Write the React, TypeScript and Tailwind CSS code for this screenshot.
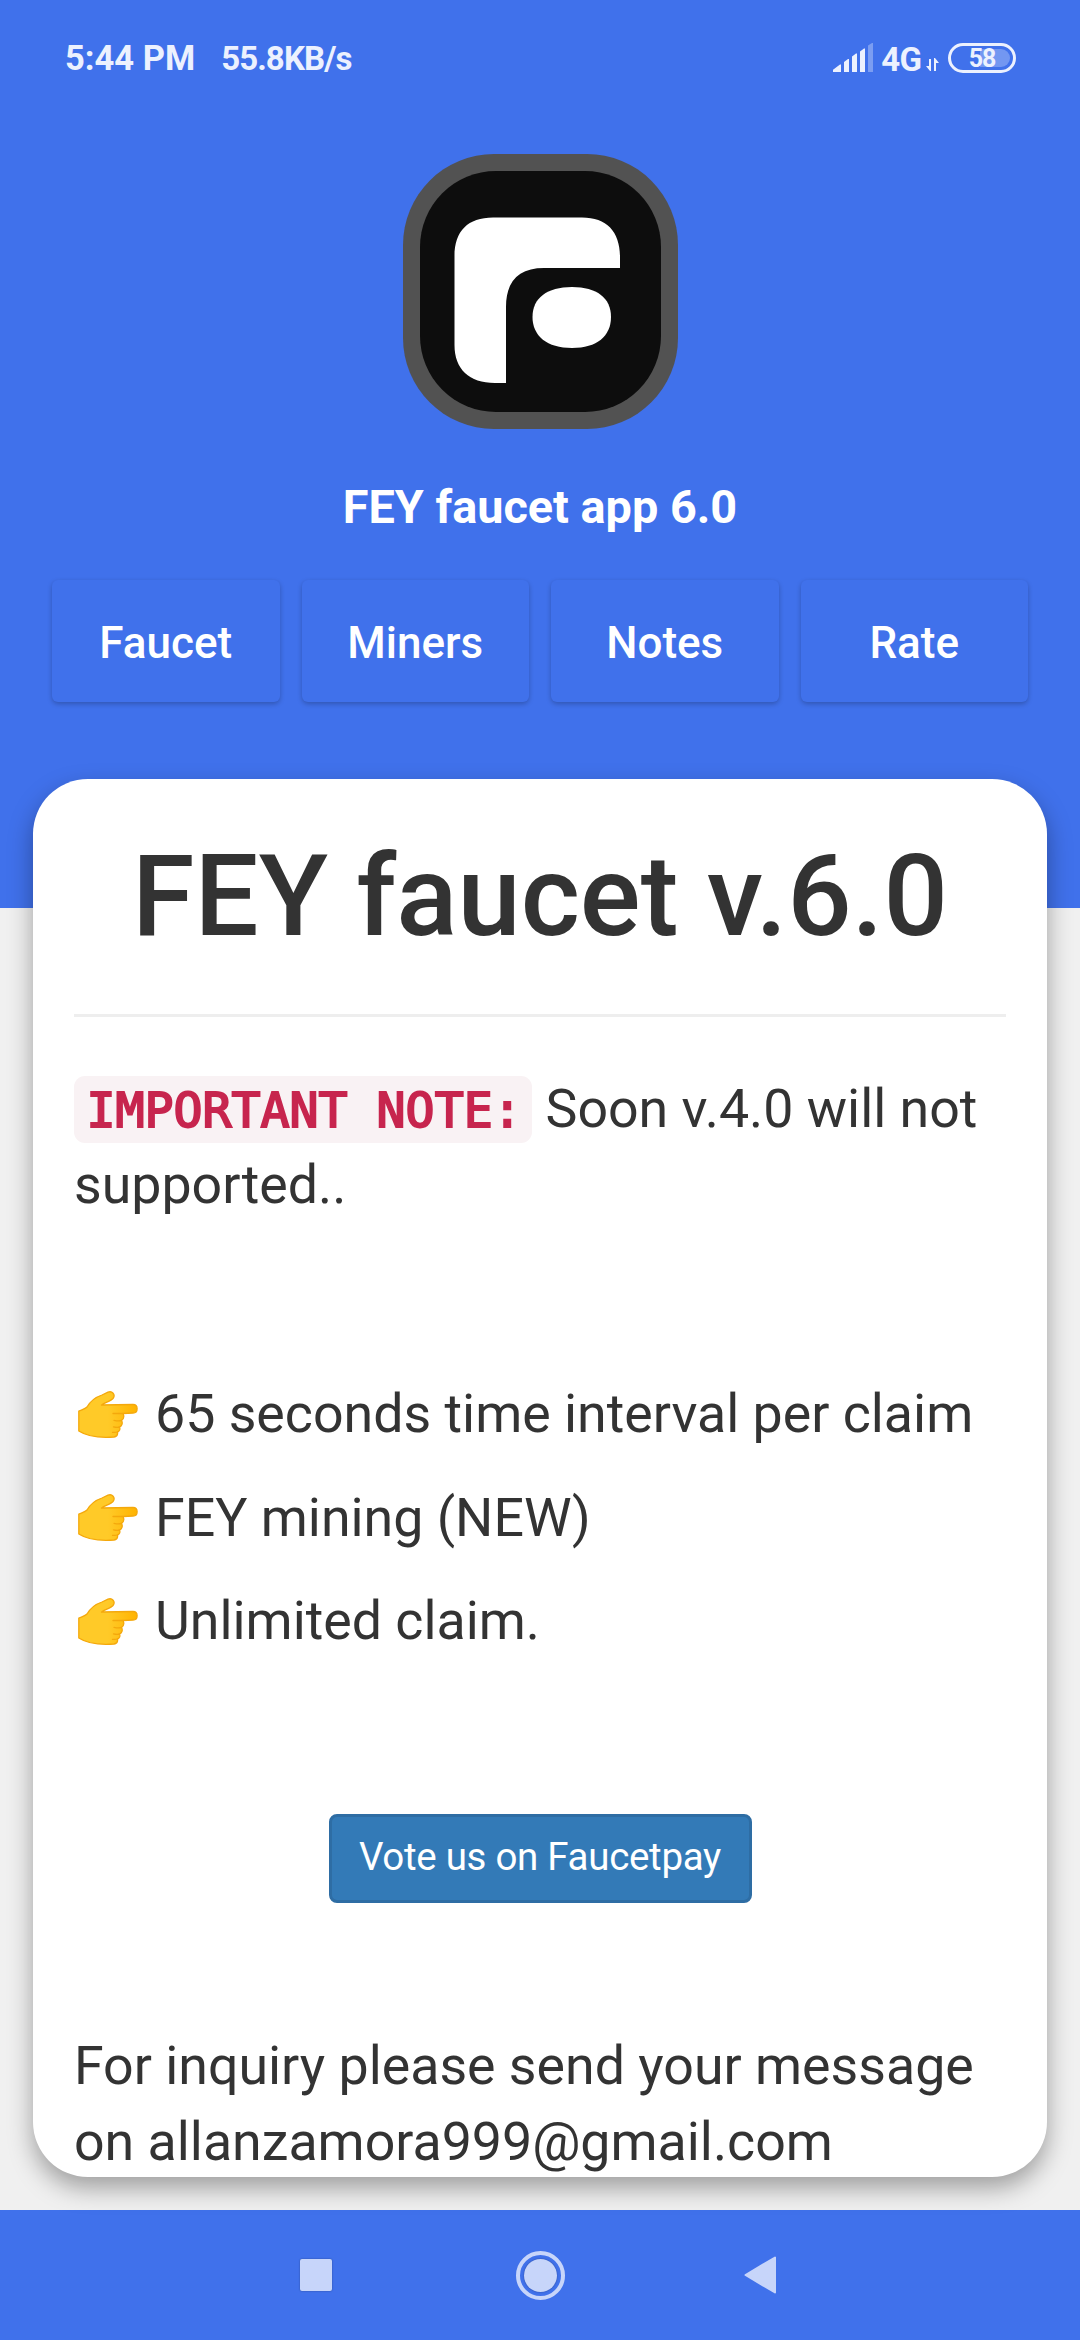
const tabs = ["Faucet", "Miners", "Notes", "Rate"];

const features = [
    "65 seconds time interval per claim",
    "FEY mining (NEW)",
    "Unlimited claim.",
];

function SignalIcon() {
    return (
        <svg width="40" height="30" viewBox="0 0 40 30" fill="#ecf1fe">
            <path d="M0 29v-2.2L7 21.5h1V29zM11 29V19l4-3h1v13zM19 29V13.500l4-3h1V29zM27 29V8.500l4-3h1V29z" />
            <path d="M35 29V2.500l4-2.500h1v29z" opacity=".35" />
        </svg>
    );
}

function DataArrows() {
    return (
        <svg width="13" height="14" viewBox="0 0 13 14" fill="#ecf1fe">
            <path d="M3 1h2v12H4L0 8h3zM8 0h1l4 5h-3v8H8z" />
        </svg>
    );
}

function Battery() {
    return (
        <div className="relative w-[68px] h-[30px] rounded-full border-[3px] border-[#ecf1fe] flex items-center justify-center">
            <div className="absolute right-[3px] top-[3px] h-[18px] w-[30px] rounded-r-full bg-[#7397f1]" />
            <span className="relative text-[25px] leading-none font-bold tracking-[-1px]">58</span>
        </div>
    );
}

function StatusBar() {
    return (
        <div className="flex h-[116px] items-start justify-between pl-[65px] pr-[64px] pt-[43px] text-[#ecf1fe] font-bold">
            <div className="flex items-baseline gap-[26px] leading-[31px]">
                <span className="text-[34.500px]">5:44 PM</span>
                <span className="text-[33px] tracking-[-0.900px]">55.8KB/s</span>
            </div>
            <div className="flex items-start">
                <SignalIcon />
                <span className="ml-[8px] text-[33px] leading-[33px] tracking-[-0.900px]">4G</span>
                <div className="ml-[5px] mt-[15px]">
                    <DataArrows />
                </div>
                <div className="ml-[9px]">
                    <Battery />
                </div>
            </div>
        </div>
    );
}

function Logo() {
    return (
        <svg width="275" height="275" viewBox="0 0 275 275">
            <rect width="275" height="275" rx="91" fill="#525252" />
            <rect x="17" y="17" width="241" height="241" rx="76" fill="#0d0d0d" />
            <path
                fill="#fff"
                d="M51.500 102C51.500 77 65 63.500 90 63.500H179C204 63.500 217 78 217 103V114H141C116 114 103 127 103 153V229H92C66 229 51.500 215 51.500 191Z"
            />
            <path
                fill="#fff"
                d="M169 133C194 133 208 144 208 163S194 194 169 194S129.500 182 129.500 163S144 133 169 133Z"
            />
        </svg>
    );
}

function PointingHand() {
    return (
        <svg className="shrink-0" width="60" height="47" viewBox="0 0 60 47">
            <defs>
                <linearGradient id="hand" x1="0" x2="1">
                    <stop offset=".5" stopColor="#ffca28" />
                    <stop offset="1" stopColor="#ffb300" />
                </linearGradient>
            </defs>
            <path
                d="M.8 20C4 18.500 7 18.200 9 16C13 9 18 6 24 4L30 1.200C34 -.5 38 3.500 35 7.500C33 10 27 11.500 23.500 14L55 13.500C60.500 13.500 60.500 21.800 55 22L45 22.500C46.500 25.500 45.500 28 43.500 29.500C45 32 44 35 41.500 36C42.500 38 41.500 40.500 39.500 41C40 44 38.500 45.500 36 46C25 46.800 10 46 .8 40Z"
                fill="url(#hand)"
                stroke="#f4a80c"
                strokeWidth="1.300"
                strokeLinejoin="round"
            />
            <path
                d="M35 22.500H45M36 29.300C39 30 41.500 30 43.500 29.500M35.500 35.800C38 36.400 40 36.400 41.500 36M34.500 41.300C36.500 41.600 38 41.500 39.500 41"
                fill="none"
                stroke="#f4a80c"
                strokeWidth="1.300"
                strokeLinecap="round"
            />
        </svg>
    );
}

function NavBar() {
    return (
        <nav className="flex h-[130px] items-center bg-[#4071eb] pl-[300px]">
            <div className="h-[32px] w-[32px] rounded-[2px] bg-[#c7d5fa] shadow-[0_0_2px_rgba(0,0,0,0.350)]" />
            <div className="ml-[184px] flex h-[49px] w-[49px] items-center justify-center rounded-full border-4 border-[#c7d5fa]">
                <div className="h-[33px] w-[33px] rounded-full bg-[#c7d5fa] shadow-[0_0_2px_rgba(0,0,0,0.350)]" />
            </div>
            <svg className="ml-[179px]" width="33" height="38" viewBox="0 0 33 38">
                <path
                    d="M1.500 19L31 1.500V36.500Z"
                    fill="#c7d5fa"
                    stroke="#c7d5fa"
                    strokeWidth="2"
                    strokeLinejoin="round"
                />
            </svg>
        </nav>
    );
}

export default function App() {
    return (
        <div className="flex h-[2340px] w-[1080px] flex-col overflow-hidden bg-[#f0f0f0] font-['Roboto',sans-serif]">
            <header className="h-[908px] shrink-0 bg-[#4071eb] text-white">
                <StatusBar />
                <div className="flex flex-col items-center pt-[38px]">
                    <Logo />
                    <p className="mt-[49px] text-[46.800px] leading-[58px] font-bold">
                        FEY faucet app 6.0
                    </p>
                </div>
                <div className="mt-[44px] grid grid-cols-4 gap-[22px] px-[52px]">
                    {tabs.map(tab => (
                        <button
                            key={tab}
                            className="h-[122px] rounded-[6px] bg-[#4071eb] pt-[4px] text-[44px] font-medium shadow-[0_2px_5px_rgba(0,0,0,0.240)]"
                        >
                            {tab}
                        </button>
                    ))}
                </div>
            </header>

            <main className="relative mx-[33px] -mt-[129px] mb-[33px] h-[1398px] shrink-0 rounded-[55px] bg-white px-[41px] text-[53.700px] leading-[76px] text-[#333] shadow-[0_11px_24px_rgba(0,0,0,0.340)]">
                <h1 className="h-[238px] border-b-[3px] border-[#eee] text-center text-[113.500px] leading-[236px] font-medium whitespace-nowrap">
                    FEY faucet v.6.0
                </h1>
                <p className="mt-[54px]">
                    <code className="rounded-[11px] bg-[#f9f2f4] pl-[12.500px] pr-[10.500px] py-[5.500px] align-[1px] font-['DejaVu_Sans_Mono',monospace] text-[48.200px] leading-none whitespace-nowrap text-[#c7254e] [-webkit-text-stroke:2px_#c7254e]">
                        IMPORTANT NOTE:
                    </code>{" "}
                    Soon v.4.0 will not supported..
                </p>
                <ul className="mt-[153px] flex flex-col gap-[27.700px]">
                    {features.map(feature => (
                        <li key={feature} className="flex items-center gap-[17px] pl-[4px] whitespace-nowrap">
                            <PointingHand />
                            {feature}
                        </li>
                    ))}
                </ul>
                <div className="mt-[154.400px] flex justify-center">
                    <button className="h-[89px] w-[423px] rounded-[8px] border-[3px] border-[#2e6da4] bg-[#337ab7] pb-[3px] text-[38.500px] tracking-[-0.300px] text-white">
                        Vote us on Faucetpay
                    </button>
                </div>
                <p className="mt-[125px]">
                    For inquiry please send your message on allanzamora999@gmail.com
                </p>
            </main>

            <NavBar />
        </div>
    );
}
